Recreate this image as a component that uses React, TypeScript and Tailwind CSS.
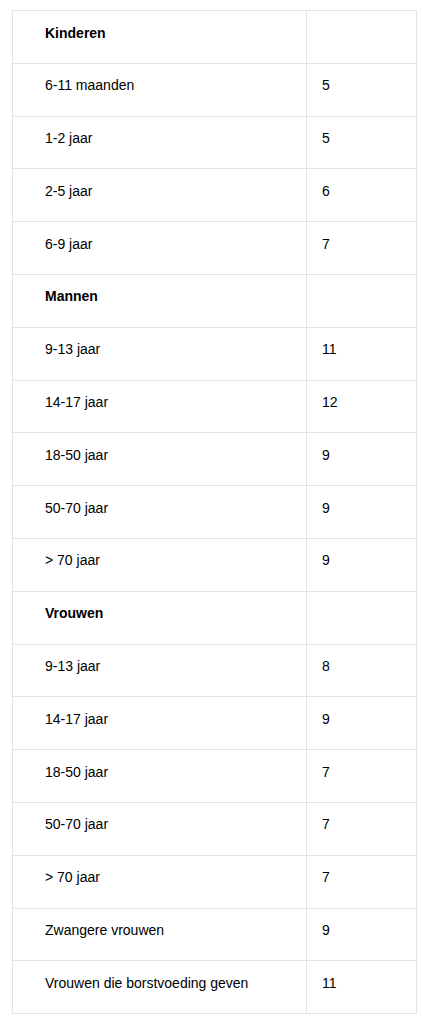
import React from 'react';

type Row = { label: string; value?: string; heading?: boolean };

const rows: Row[] = [
  { label: 'Kinderen', heading: true },
  { label: '6-11 maanden', value: '5' },
  { label: '1-2 jaar', value: '5' },
  { label: '2-5 jaar', value: '6' },
  { label: '6-9 jaar', value: '7' },
  { label: 'Mannen', heading: true },
  { label: '9-13 jaar', value: '11' },
  { label: '14-17 jaar', value: '12' },
  { label: '18-50 jaar', value: '9' },
  { label: '50-70 jaar', value: '9' },
  { label: '> 70 jaar', value: '9' },
  { label: 'Vrouwen', heading: true },
  { label: '9-13 jaar', value: '8' },
  { label: '14-17 jaar', value: '9' },
  { label: '18-50 jaar', value: '7' },
  { label: '50-70 jaar', value: '7' },
  { label: '> 70 jaar', value: '7' },
  { label: 'Zwangere vrouwen', value: '9' },
  { label: 'Vrouwen die borstvoeding geven', value: '11' },
];

export default function App() {
  return (
    <div className="min-h-screen bg-white pt-[10px] pl-[12px]" style={{ fontFamily: '"Liberation Sans", Arial, sans-serif' }}>
      <table className="w-[405px] border-collapse text-[14px] leading-[20px] text-black">
        <colgroup>
          <col className="w-[294px]" />
          <col />
        </colgroup>
        <tbody>
          {rows.map((r, i) => (
            <tr key={i}>
              <td className={`border border-[#e3e3e3] pl-[32px] pt-[11.5px] pb-[20.3px] align-top ${r.heading ? 'font-bold' : ''}`}>
                {r.label}
              </td>
              <td className="border border-[#e3e3e3] pl-[15px] pt-[11.5px] pb-[20.3px] align-top">
                {r.value}
              </td>
            </tr>
          ))}
        </tbody>
      </table>
    </div>
  );
}
